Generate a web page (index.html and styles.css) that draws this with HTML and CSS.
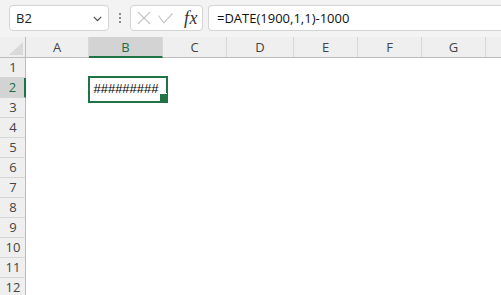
FILE: index.html
```html
<!DOCTYPE html>
<html>
<head>
<meta charset="utf-8">
<link rel="stylesheet" href="styles.css">
</head>
<body>
<div class="app">
  <div class="toolbar">
    <div class="namebox">
      <span class="name">B2</span>
      <svg class="chev" width="9" height="6" viewBox="0 0 9 6"><path d="M0.8 0.8 L4.5 4.6 L8.2 0.8" fill="none" stroke="#4a4a4a" stroke-width="1.2"/></svg>
    </div>
    <div class="dots"><i></i><i></i><i></i></div>
    <div class="fxbox">
      <svg class="ico" width="14" height="14" viewBox="0 0 14 14"><path d="M1 1 L13 13 M13 1 L1 13" stroke="#c6c6c6" stroke-width="1.1" fill="none"/></svg>
      <svg class="ico" width="15" height="11" viewBox="0 0 15 11"><path d="M0.5 2.5 L5.8 9.8 L14.5 0.5" stroke="#c6c6c6" stroke-width="1.1" fill="none"/></svg>
      <span class="fx">fx</span>
    </div>
    <div class="formula">=DATE(1900,1,1)-1000</div>
  </div>
  <div class="sheet">
    <div class="row head">
      <div class="rh corner"><svg width="14" height="13" viewBox="0 0 14 13"><path d="M14 0 L14 13 L0 13 Z" fill="#d9d9d9"/></svg></div>
      <div class="ch a">A</div>
      <div class="ch b sel">B</div>
      <div class="ch c">C</div>
      <div class="ch d">D</div>
      <div class="ch e">E</div>
      <div class="ch f">F</div>
      <div class="ch g">G</div>
      <div class="ch h"></div>
    </div>
    <div class="row"><div class="rh">1</div><div class="cells"></div></div>
    <div class="row"><div class="rh sel">2</div><div class="cells"><div class="cell a"></div><div class="cell b active"><span class="val">#########</span></div></div></div>
    <div class="row"><div class="rh">3</div><div class="cells"></div></div>
    <div class="row"><div class="rh">4</div><div class="cells"></div></div>
    <div class="row"><div class="rh">5</div><div class="cells"></div></div>
    <div class="row"><div class="rh">6</div><div class="cells"></div></div>
    <div class="row"><div class="rh">7</div><div class="cells"></div></div>
    <div class="row"><div class="rh">8</div><div class="cells"></div></div>
    <div class="row"><div class="rh">9</div><div class="cells"></div></div>
    <div class="row"><div class="rh">10</div><div class="cells"></div></div>
    <div class="row"><div class="rh">11</div><div class="cells"></div></div>
    <div class="row"><div class="rh">12</div><div class="cells"></div></div>
  </div>
</div>
</body>
</html>
```

FILE: styles.css
```css
* { box-sizing: border-box; }
html, body { margin: 0; padding: 0; }
body {
  width: 501px;
  height: 295px;
  overflow: hidden;
  background: #ffffff;
  font-family: "Open Sans", "Noto Sans", sans-serif;
}
.app { display: flex; flex-direction: column; width: 501px; }

.toolbar {
  height: 37px;
  background: #f3f3f3;
  display: flex;
  align-items: flex-start;
  padding: 5px 0 0 9px;
}
.namebox {
  width: 100px;
  height: 26px;
  background: #fff;
  border: 1px solid #d4d4d4;
  border-radius: 4px;
  display: flex;
  align-items: center;
  justify-content: space-between;
  padding: 0 6px 0 6px;
}
.name { font-size: 13px; color: #222; line-height: 1; }
.chev { margin-top: 1px; }
.dots {
  width: 21px;
  height: 26px;
  display: flex;
  flex-direction: column;
  align-items: center;
  justify-content: center;
  gap: 2px;
}
.dots i { width: 2px; height: 2px; background: #8a8a8a; display: block; }
.fxbox {
  width: 73px;
  height: 26px;
  background: #fff;
  border: 1px solid #d4d4d4;
  border-radius: 4px;
  display: flex;
  align-items: center;
  padding: 0 0 0 6px;
  gap: 7px;
}
.fxbox .ico:nth-child(2) { margin-left: 0; }
.fx {
  font-family: "Liberation Serif", "DejaVu Serif", serif;
  font-style: italic;
  font-size: 18px;
  color: #333;
  margin-left: 4px;
  letter-spacing: 0.5px;
}
.formula {
  flex: 1;
  margin-left: 5px;
  height: 26px;
  background: #fff;
  border: 1px solid #d4d4d4;
  border-right: none;
  border-radius: 4px 0 0 4px;
  font-size: 13px;
  color: #111;
  display: flex;
  align-items: center;
  padding-left: 8px;
}

.sheet { display: flex; flex-direction: column; }
.row { display: flex; height: 20px; }
.row.head { height: 21px; background: #efefef; border-bottom: 1px solid #bcbcbc; }
.rh {
  width: 26px;
  flex: none;
  background: #efefef;
  border-right: 1px solid #bcbcbc;
  border-bottom: 1px solid #d6d6d6;
  font-size: 13px;
  color: #444;
  display: flex;
  align-items: center;
  justify-content: center;
  line-height: 1;
  padding-left: 1px;
}
.rh.corner {
  border-bottom: none;
  align-items: flex-end;
  justify-content: flex-end;
  padding: 0 2px 2px 0;
}
.rh.sel {
  background: #d3d3d3;
  color: #1f6e43;
  border-right: 2px solid #217346;
}
.ch {
  flex: none;
  border-right: 1px solid #d8d8d8;
  font-size: 13px;
  color: #444;
  display: flex;
  align-items: center;
  justify-content: center;
  line-height: 1;
}
.ch.sel {
  background: #d3d3d3;
  color: #1f6e43;
  border-bottom: 2px solid #217346;
  margin-bottom: -1px;
  padding-top: 1px;
}
.a { width: 63px; }
.b { width: 74px; }
.c { width: 64px; }
.d { width: 67px; }
.e { width: 64px; }
.f { width: 64px; }
.g { width: 64px; }
.h { width: 20px; border-right: none; }

.cells { display: flex; flex: 1; background: #fff; }
.cell { flex: none; height: 20px; }
.cell.active { position: relative; display: flex; align-items: center; justify-content: center; }
.cell.active::before {
  content: "";
  position: absolute;
  left: -1px;
  top: -2px;
  width: 76px;
  height: 23px;
  border: 2px solid #217346;
}
.cell.active::after {
  content: "";
  position: absolute;
  left: 70px;
  top: 15px;
  width: 7px;
  height: 7px;
  background: #217346;
  border-left: 1px solid #fff;
  border-top: 1px solid #fff;
}
.val {
  font-family: "Liberation Sans", Arial, sans-serif;
  font-size: 13px;
  color: #000;
  line-height: 1;
  position: relative;
  top: 0px;
}
```
